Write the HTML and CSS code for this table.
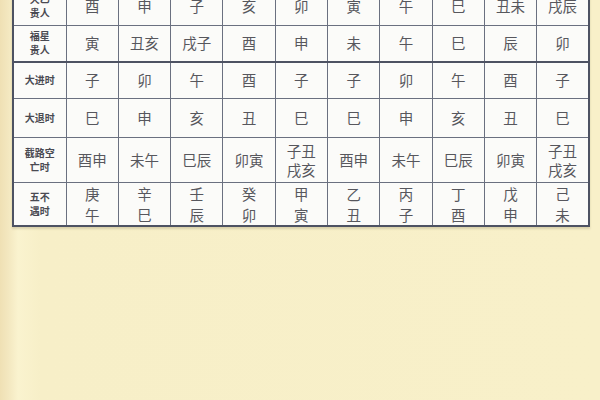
FILE: index.html
```html
<!DOCTYPE html>
<html lang="zh-CN">
<head>
<meta charset="utf-8">
<title>时辰表</title>
<link rel="stylesheet" href="styles.css">
</head>
<body>
<div class="page">
  <table class="chart">
    <colgroup>
      <col class="c-label">
      <col><col><col><col><col><col><col><col><col><col>
    </colgroup>
    <tbody>
      <tr class="r1">
        <th>天乙<br>贵人</th>
        <td>酉</td><td>申</td><td>子</td><td>亥</td><td>卯</td><td>寅</td><td>午</td><td>巳</td><td>丑未</td><td>戌辰</td>
      </tr>
      <tr class="r2 sep">
        <th>福星<br>贵人</th>
        <td>寅</td><td>丑亥</td><td>戌子</td><td>酉</td><td>申</td><td>未</td><td>午</td><td>巳</td><td>辰</td><td>卯</td>
      </tr>
      <tr class="r3">
        <th>大进时</th>
        <td>子</td><td>卯</td><td>午</td><td>酉</td><td>子</td><td>子</td><td>卯</td><td>午</td><td>酉</td><td>子</td>
      </tr>
      <tr class="r4">
        <th>大退时</th>
        <td>巳</td><td>申</td><td>亥</td><td>丑</td><td>巳</td><td>巳</td><td>申</td><td>亥</td><td>丑</td><td>巳</td>
      </tr>
      <tr class="r5">
        <th>截路空<br>亡时</th>
        <td>酉申</td><td>未午</td><td>巳辰</td><td>卯寅</td><td>子丑<br>戌亥</td><td>酉申</td><td>未午</td><td>巳辰</td><td>卯寅</td><td>子丑<br>戌亥</td>
      </tr>
      <tr class="r6">
        <th>五不<br>遇时</th>
        <td>庚<br>午</td><td>辛<br>巳</td><td>壬<br>辰</td><td>癸<br>卯</td><td>甲<br>寅</td><td>乙<br>丑</td><td>丙<br>子</td><td>丁<br>酉</td><td>戊<br>申</td><td>己<br>未</td>
      </tr>
    </tbody>
  </table>
</div>
</body>
</html>
```
FILE: styles.css
```css
html, body {
  margin: 0;
  padding: 0;
  width: 600px;
  height: 400px;
  overflow: hidden;
}
body {
  background: linear-gradient(90deg, #efe0b4 0px, #f3e7bf 8px, #faf3cf 18px, #f7efc8 40px, #f8f0c9 100%);
  font-family: "Noto Sans CJK SC", "Noto Sans CJK TC", sans-serif;
}
.page {
  padding: 0 10px 0 12px;
}
.chart {
  width: 578px;
  margin-top: -14px;
  table-layout: fixed;
  border-collapse: collapse;
  background: #fbfbf9;
  border: 2px solid #4d5262;
  box-shadow: 0 2px 2px rgba(120, 110, 80, 0.25);
}
.c-label {
  width: 53px;
}
.chart th,
.chart td {
  border: 1px solid #6a7080;
  text-align: center;
  vertical-align: middle;
  padding: 0;
}
.chart th {
  font-size: 10px;
  line-height: 14px;
  font-weight: 700;
  color: #4a4a52;
}
.chart td {
  font-size: 14.5px;
  line-height: 18px;
  font-weight: 400;
  color: #57575d;
}
.r1 { height: 38px; }
.r2 { height: 37px; }
.r3 { height: 36px; }
.r4 { height: 39px; }
.r5 { height: 45px; }
.r6 { height: 43px; }
.r5 td {
  line-height: 19px;
}
.r6 td {
  line-height: 21px;
}
.sep th,
.sep td {
  border-bottom: 2px solid #4d5262;
}
```
